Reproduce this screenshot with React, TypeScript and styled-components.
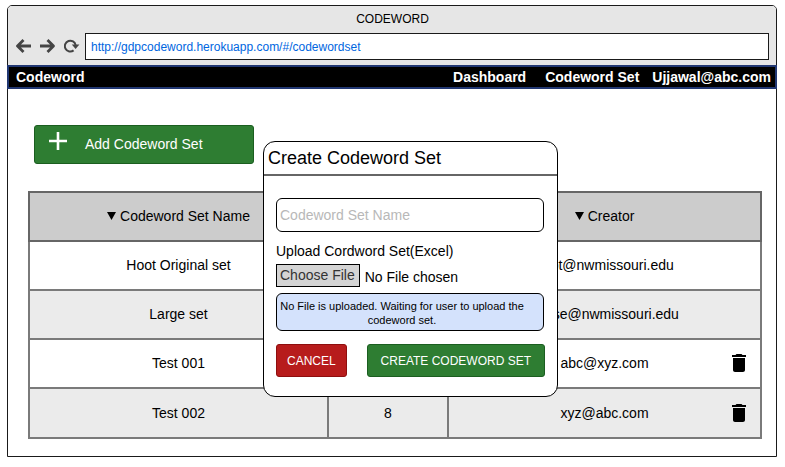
import React from "react";
import styled, { createGlobalStyle } from "styled-components";

const GlobalStyle = createGlobalStyle`
  *, *::before, *::after { box-sizing: border-box; }
  body { margin: 0; background: #fff; }
  body, button, input { font-family: "Liberation Sans", Arial, sans-serif; font-size: 14px; color: #000; }
`;

const BrowserWindow = styled.div`
  margin: 5px 8px 10px 7px;
  border: 1px solid #1a1a1a;
  border-radius: 5px 5px 0 0;
  background: #fff;
`;

const Chrome = styled.header`
  background: #e6e6e6;
  border-radius: 4px 4px 0 0;
  padding: 0 7px 5px 8px;
`;

const WindowTitle = styled.div`
  height: 27px;
  line-height: 27px;
  text-align: center;
  font-size: 12px;
`;

const AddressRow = styled.div`
  display: flex;
  align-items: center;
`;

const ChromeButton = styled.button`
  display: flex;
  flex: none;
  width: 16px;
  margin-right: 8px;
  padding: 0 0 2px;
  border: 0;
  background: none;
`;

const AddressInput = styled.input`
  flex: 1;
  min-width: 0;
  height: 27px;
  margin-left: -3px;
  padding: 0 5px;
  border: 1px solid #1a1a1a;
  border-radius: 0;
  background: #fff;
  color: #0066e0;
  font-size: 12px;
`;

const NavBar = styled.nav`
  display: flex;
  align-items: center;
  height: 24px;
  margin: 0 -1px;
  padding: 0 4px 0 7px;
  border: 2px solid #213772;
  background: #000;
`;

const NavLink = styled.a<{ $gap?: number }>`
  color: #fff;
  font-weight: bold;
  line-height: 20px;
  text-decoration: none;
  margin-left: ${(p) => p.$gap ?? 0}px;
`;

const NavSpacer = styled.div`
  flex: 1;
`;

const Content = styled.main`
  position: relative;
  padding: 36px 14px 17px 20px;
`;

const AddButton = styled.button`
  display: flex;
  align-items: center;
  gap: 18px;
  width: 220px;
  height: 39px;
  margin: 0 0 27px 6px;
  padding: 0 14px 1px;
  border: 1px solid #1b5e20;
  border-radius: 3px;
  background: #2e7d32;
  color: #fff;
`;

const PlusIcon = styled.svg`
  margin-bottom: 6px;
`;

const Table = styled.table`
  width: 100%;
  border-collapse: collapse;
  table-layout: fixed;
  text-align: center;
`;

const HeadCell = styled.th<{ $width?: number }>`
  width: ${(p) => (p.$width ? `${p.$width}px` : "auto")};
  height: 49px;
  padding: 0 0 2px;
  border: 2px solid #666;
  background: #ccc;
  font-weight: normal;
`;

const SortButton = styled.button`
  display: inline-flex;
  align-items: center;
  gap: 4px;
  padding: 0;
  border: 0;
  background: none;
`;

const Row = styled.tr`
  &:nth-child(even) {
    background: #ebebeb;
  }
  &:last-child td {
    height: 50px;
  }
`;

const Cell = styled.td`
  height: 49px;
  padding: 0 0 1px;
  border: 2px solid #7a7a7a;
`;

const CreatorContent = styled.div`
  display: grid;
  grid-template-columns: 1fr auto 1fr;
  align-items: center;
  padding: 0 14px;
`;

const DeleteButton = styled.button`
  display: flex;
  grid-column: 3;
  justify-self: end;
  padding: 0;
  border: 0;
  background: none;
`;

const CreatorName = styled.span`
  grid-column: 2;
`;

const Dialog = styled.section`
  position: absolute;
  top: 52px;
  left: calc(50% - 129px);
  width: 295px;
  border: 1px solid #000;
  border-radius: 12px;
  background: #fff;
`;

const DialogTitle = styled.h1`
  margin: 0;
  padding: 0 4px;
  border-bottom: 2px solid #666;
  font-size: 18px;
  font-weight: normal;
  line-height: 32px;
`;

const DialogForm = styled.form`
  padding: 22px 13px 19px 12px;
`;

const NameInput = styled.input`
  display: block;
  width: 100%;
  height: 34px;
  padding: 0 3px;
  border: 1px solid #000;
  border-radius: 6px;
  background: #fff;
  &::placeholder {
    color: #b8b8b8;
    opacity: 1;
  }
`;

const FieldLabel = styled.label`
  display: block;
  margin-top: 9px;
  line-height: 20px;
`;

const FileRow = styled.div`
  display: flex;
  align-items: flex-start;
  gap: 5px;
  margin: 3px 0 4px;
`;

const HiddenFileInput = styled.input`
  position: absolute;
  width: 1px;
  height: 1px;
  overflow: hidden;
  clip-path: inset(50%);
`;

const ChooseFile = styled.label`
  height: 23px;
  padding: 0 4px 0 3px;
  border: 1px solid #000;
  background: #d4d4d4;
  color: #333;
  line-height: 20px;
`;

const FileName = styled.span`
  padding-top: 2px;
  line-height: 23px;
`;

const Status = styled.p`
  margin: 0 0 13px;
  padding: 5px 18px 3px 2px;
  border: 1px solid #000;
  border-radius: 6px;
  background: #d4e2fc;
  font-size: 11px;
  line-height: 14px;
  text-align: center;
`;

const Actions = styled.div`
  display: flex;
  justify-content: space-between;
  margin-right: -1px;
`;

const ActionButton = styled.button<{ $danger?: boolean }>`
  height: 33px;
  padding: 0 ${(p) => (p.$danger ? 10 : 13)}px;
  border: 1px solid ${(p) => (p.$danger ? "#8e0e0e" : "#1b5e20")};
  border-radius: 3px;
  background: ${(p) => (p.$danger ? "#b71c1c" : "#2e7d32")};
  color: #fff;
  font-size: 12px;
  white-space: nowrap;
`;

const ArrowIcon = ({ forward }: { forward?: boolean }) => (
  <svg width="16" height="14" viewBox="0 0 16 14" fill="none" stroke="#444" strokeWidth="2.8" strokeLinejoin="round">
    <path d={forward ? "M0 7H13M7.5 1L13.5 7L7.5 13" : "M15 7H2M7.5 1L1.5 7L7.5 13"} />
  </svg>
);

const ReloadIcon = () => (
  <svg width="16" height="14" viewBox="0 0 16 14">
    <path d="M9.6 11.4A5.4 5.4 0 1 1 11.6 6.2" fill="none" stroke="#444" strokeWidth="2" />
    <path d="M7.8 5.4H15.4L11.6 10Z" fill="#444" />
  </svg>
);

const SortIcon = () => (
  <svg width="9" height="9" viewBox="0 0 9 9">
    <path d="M0 1H9L4.5 9Z" />
  </svg>
);

const TrashIcon = () => (
  <svg width="14" height="18" viewBox="5 3 14 18">
    <path d="M6 19c0 1.1.9 2 2 2h8c1.1 0 2-.9 2-2V7H6v12zM19 4h-3.5l-1-1h-5l-1 1H5v2h14V4z" />
  </svg>
);

type CodewordSet = { name: string; count?: number; creator: string; removable?: boolean };

const codewordSets: CodewordSet[] = [
  { name: "Hoot Original set", creator: "hoot@nwmissouri.edu" },
  { name: "Large set", creator: "chase@nwmissouri.edu" },
  { name: "Test 001", creator: "abc@xyz.com", removable: true },
  { name: "Test 002", count: 8, creator: "xyz@abc.com", removable: true },
];

export default function App() {
  return (
    <>
      <GlobalStyle />
      <BrowserWindow>
        <Chrome>
          <WindowTitle>CODEWORD</WindowTitle>
          <AddressRow>
            <ChromeButton aria-label="Back"><ArrowIcon /></ChromeButton>
            <ChromeButton aria-label="Forward"><ArrowIcon forward /></ChromeButton>
            <ChromeButton aria-label="Reload"><ReloadIcon /></ChromeButton>
            <AddressInput aria-label="Address" defaultValue="http://gdpcodeword.herokuapp.com/#/codewordset" />
          </AddressRow>
        </Chrome>
        <NavBar>
          <NavLink href="#/">Codeword</NavLink>
          <NavSpacer />
          <NavLink href="#/dashboard">Dashboard</NavLink>
          <NavLink href="#/codewordset" $gap={19}>Codeword Set</NavLink>
          <NavLink href="#/account" $gap={13}>Ujjawal@abc.com</NavLink>
        </NavBar>
        <Content>
          <AddButton>
            <PlusIcon width="18" height="18" viewBox="0 0 18 18" stroke="#fff" strokeWidth="2.6">
              <path d="M9 0V18M0 9H18" />
            </PlusIcon>
            Add Codeword Set
          </AddButton>
          <Table>
            <thead>
              <tr>
                <HeadCell $width={299}><SortButton><SortIcon />Codeword Set Name</SortButton></HeadCell>
                <HeadCell $width={120} />
                <HeadCell><SortButton><SortIcon />Creator</SortButton></HeadCell>
              </tr>
            </thead>
            <tbody>
              {codewordSets.map((set) => (
                <Row key={set.name}>
                  <Cell>{set.name}</Cell>
                  <Cell>{set.count}</Cell>
                  <Cell>
                    <CreatorContent>
                      <CreatorName>{set.creator}</CreatorName>
                      {set.removable && (
                        <DeleteButton aria-label={`Delete ${set.name}`}><TrashIcon /></DeleteButton>
                      )}
                    </CreatorContent>
                  </Cell>
                </Row>
              ))}
            </tbody>
          </Table>
          <Dialog role="dialog" aria-labelledby="dialog-title">
            <DialogTitle id="dialog-title">Create Codeword Set</DialogTitle>
            <DialogForm onSubmit={(e) => e.preventDefault()}>
              <NameInput aria-label="Codeword Set Name" placeholder="Codeword Set Name" />
              <FieldLabel htmlFor="set-file">Upload Cordword Set(Excel)</FieldLabel>
              <FileRow>
                <HiddenFileInput id="set-file" type="file" />
                <ChooseFile htmlFor="set-file">Choose File</ChooseFile>
                <FileName>No File chosen</FileName>
              </FileRow>
              <Status role="status">No File is uploaded. Waiting for user to upload the codeword set.</Status>
              <Actions>
                <ActionButton type="button" $danger>CANCEL</ActionButton>
                <ActionButton type="submit">CREATE CODEWORD SET</ActionButton>
              </Actions>
            </DialogForm>
          </Dialog>
        </Content>
      </BrowserWindow>
    </>
  );
}
